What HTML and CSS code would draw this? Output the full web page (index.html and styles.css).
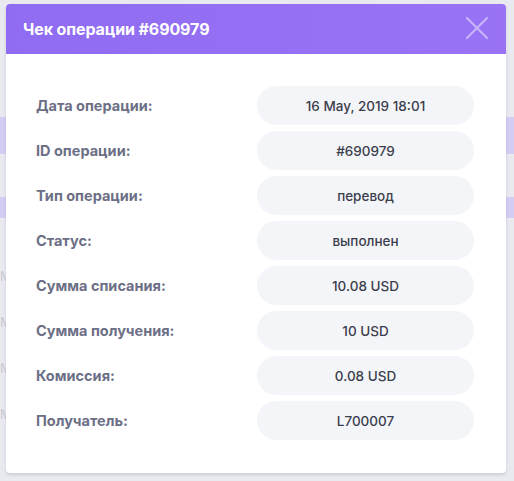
FILE: index.html
```html
<!DOCTYPE html>
<html lang="ru">
<head>
<meta charset="utf-8">
<title>Чек операции</title>
<link rel="stylesheet" href="styles.css">
</head>
<body>
<div class="page">
  <div class="bg-row bg-tall"></div>
  <div class="bg-gap"></div>
  <div class="bg-row bg-short"></div>
  <div class="bg-lines">
    <span>М</span><span>М</span><span>М</span><span>М</span>
  </div>
</div>
<div class="modal">
  <div class="modal-header">
    <h1 class="modal-title">Чек операции #690979</h1>
    <svg class="close" width="22" height="22" viewBox="0 0 22 22" aria-hidden="true">
      <path d="M1 1 L21 21 M21 1 L1 21" stroke="currentColor" stroke-width="2" fill="none" stroke-linecap="round"/>
    </svg>
  </div>
  <div class="modal-body">
    <div class="row"><span class="label">Дата операции:</span><span class="value">16 May, 2019 18:01</span></div>
    <div class="row"><span class="label">ID операции:</span><span class="value">#690979</span></div>
    <div class="row"><span class="label">Тип операции:</span><span class="value">перевод</span></div>
    <div class="row"><span class="label">Статус:</span><span class="value">выполнен</span></div>
    <div class="row"><span class="label">Сумма списания:</span><span class="value">10.08 USD</span></div>
    <div class="row"><span class="label">Сумма получения:</span><span class="value">10 USD</span></div>
    <div class="row"><span class="label">Комиссия:</span><span class="value">0.08 USD</span></div>
    <div class="row"><span class="label">Получатель:</span><span class="value">L700007</span></div>
  </div>
</div>
</body>
</html>
```

FILE: styles.css
```css
html, body {
  margin: 0;
  padding: 0;
}
body {
  width: 514px;
  height: 481px;
  background: #e9e9f0;
  font-family: Inter, "Noto Sans", "DejaVu Sans", sans-serif;
  position: relative;
  overflow: hidden;
}
.page {
  padding-top: 117px;
  display: flex;
  flex-direction: column;
}
.bg-row {
  background: #d4cdf3;
}
.bg-tall { height: 37px; }
.bg-gap { height: 43px; }
.bg-short { height: 21px; }
.bg-lines {
  display: flex;
  flex-direction: column;
  gap: 30px;
  padding-top: 50px;
  color: #c9c9d4;
  font-size: 13px;
}
.modal {
  position: absolute;
  left: 6px;
  top: 4px;
  width: 500px;
  height: 469px;
  background: #ffffff;
  border-radius: 4px;
  box-shadow: 0 2px 3px rgba(80, 80, 110, 0.18);
  overflow: hidden;
}
.modal-header {
  height: 50px;
  background: linear-gradient(90deg, #8f6cf2 0%, #9a73f5 100%);
  display: flex;
  align-items: center;
  justify-content: space-between;
  padding: 0 18px 0 17px;
}
.modal-title {
  margin: 0;
  color: #ffffff;
  font-size: 16px;
  font-weight: 700;
  letter-spacing: -0.1px;
}
.close {
  color: #c8b6fb;
  margin-top: -2px;
}
.modal-body {
  padding: 32px 32px 32px 30px;
  display: flex;
  flex-direction: column;
  gap: 6px;
}
.row {
  display: flex;
  align-items: center;
  justify-content: space-between;
}
.label {
  color: #6c6f86;
  font-size: 14.5px;
  font-weight: 700;
}
.value {
  width: 217px;
  height: 39px;
  border-radius: 20px;
  background: #f4f5f9;
  color: #3b3e4c;
  font-size: 13.5px;
  font-weight: 500;
  display: flex;
  align-items: center;
  justify-content: center;
}
```
